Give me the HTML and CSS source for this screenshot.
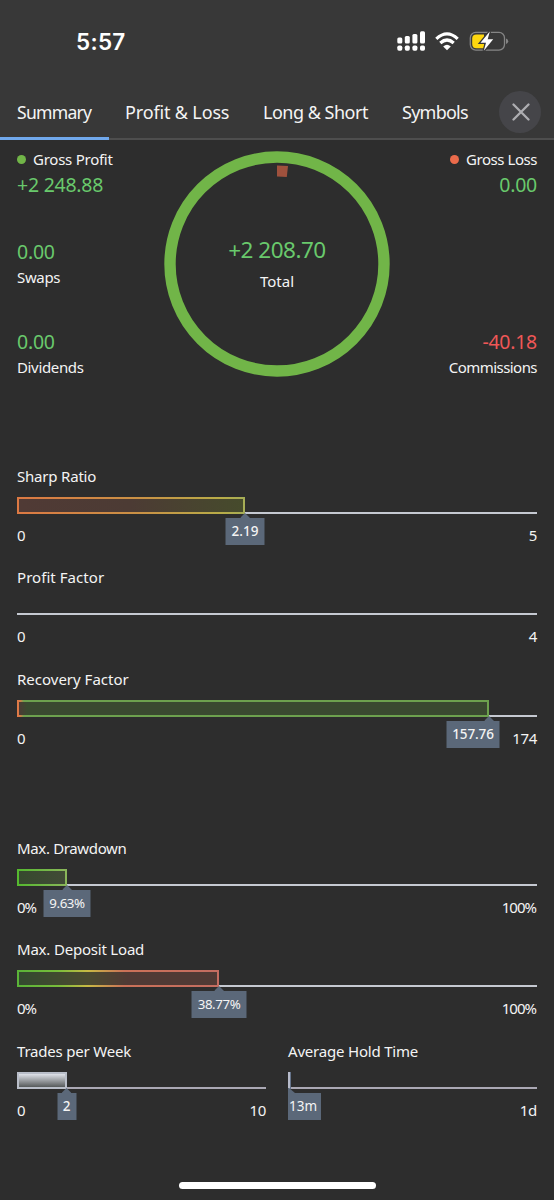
FILE: index.html
```html
<!DOCTYPE html>
<html lang="en">
<head>
<meta charset="utf-8">
<title>Summary</title>
<link rel="stylesheet" href="styles.css">
</head>
<body>
<header class="header">
  <div class="status">
    <span class="time">5:57</span>
    <svg class="status-icons" width="114" height="26" viewBox="396 29 114 26">
      <g fill="#fff">
        <rect x="397.3" y="37.5" width="5" height="6" rx="1.5"/><rect x="404.8" y="36" width="5" height="7.5" rx="1.5"/><rect x="412.4" y="34" width="5" height="9.5" rx="1.5"/><rect x="420" y="31.3" width="5" height="12.2" rx="1.5"/>
        <rect x="397.3" y="45.5" width="5" height="5.3" rx="1.7"/><rect x="404.8" y="45.5" width="5" height="5.3" rx="1.7"/><rect x="412.4" y="45.5" width="5" height="5.3" rx="1.7"/><rect x="420" y="45.5" width="5" height="5.3" rx="1.7"/>
        <path d="M443.2 46.4Q447 43.2 450.8 46.4L447 50.3Z"/>
      </g>
      <g fill="none" stroke="#fff" stroke-width="3.2">
        <path d="M436.3 38.9Q447 28.9 457.7 38.9"/><path d="M440.3 43Q447 37 453.7 43"/>
      </g>
      <rect x="470.3" y="32.4" width="34.2" height="17.7" rx="5.5" fill="none" stroke="#858585" stroke-width="1.3"/>
      <path d="M506 38.5Q508.2 39.2 508.2 41.2T506 44Z" fill="#858585"/>
      <path d="M476.5 34.4H484V48.2H476.5Q472.2 48.2 472.2 44V38.6Q472.2 34.4 476.5 34.4Z" fill="#fdd60f"/>
      <path d="M489.8 31.5L480.5 42.7H486L483.8 50.8L493.2 39.3H487.7Z" fill="#fff" stroke="#383838" stroke-width="2.6" paint-order="stroke"/>
    </svg>
  </div>
  <nav class="tabs">
    <a class="tab tab-summary active"><span>Summary</span></a>
    <a class="tab tab-profit"><span>Profit &amp; Loss</span></a>
    <a class="tab tab-long"><span>Long &amp; Short</span></a>
    <a class="tab tab-symbols"><span>Symbols</span></a>
    <button class="close" aria-label="Close"><svg width="18" height="18" viewBox="0 0 18 18"><path d="M1.5 1.5L16.5 16.5M16.5 1.5L1.5 16.5" fill="none" stroke="#adadb1" stroke-width="2.3" stroke-linecap="round"/></svg></button>
  </nav>
</header>
<main>
  <section class="overview">
    <div class="stats">
      <div class="stat"><div class="label gp"><i class="dot green"></i>Gross Profit</div><div class="value">+2 248.88</div></div>
      <div class="stat swaps"><div class="value">0.00</div><div class="label">Swaps</div></div>
      <div class="stat last"><div class="value">0.00</div><div class="label">Dividends</div></div>
    </div>
    <div class="donut">
      <svg width="226" height="226" viewBox="-113 -113 226 226"><circle r="107" fill="none" stroke="#71b548" stroke-width="11.4"/><path d="M0 -98.5A98.5 98.5 0 0 1 11 -97.9L9.8 -87A87.5 87.5 0 0 0 0 -87.5Z" fill="#9f513d"/></svg>
      <div class="total"><div class="total-value">+2 208.70</div><div class="label tot">Total</div></div>
    </div>
    <div class="stats right">
      <div class="stat"><div class="label gl"><i class="dot red"></i>Gross Loss</div><div class="value">0.00</div></div>
      <div class="stat last"><div class="value negative">-40.18</div><div class="label comm">Commissions</div></div>
    </div>
  </section>
  <section class="gauges">
    <div class="gauge"><div class="title t-sharp">Sharp Ratio</div><div class="track"><div class="bar sharp" style="width:228px"><span class="tip w39">2.19</span></div></div><div class="scale"><span>0</span><span>5</span></div></div>
    <div class="gauge"><div class="title t-pf">Profit Factor</div><div class="track"></div><div class="scale"><span>0</span><span>4</span></div></div>
    <div class="gauge"><div class="title t-rf">Recovery Factor</div><div class="track"><div class="bar recovery" style="width:472px"><span class="tip w53">157.76</span></div></div><div class="scale"><span>0</span><span>174</span></div></div>
  </section>
  <section class="gauges risk">
    <div class="gauge"><div class="title t-dd">Max. Drawdown</div><div class="track"><div class="bar drawdown" style="width:50px"><span class="tip w47">9.63%</span></div></div><div class="scale"><span class="pct">0%</span><span class="pct">100%</span></div></div>
    <div class="gauge"><div class="title t-dl">Max. Deposit Load</div><div class="track"><div class="bar deposit" style="width:202px"><span class="tip w55">38.77%</span></div></div><div class="scale"><span class="pct">0%</span><span class="pct">100%</span></div></div>
  </section>
  <section class="activity">
    <div class="gauge"><div class="title t-tw">Trades per Week</div><div class="track dim"><div class="bar trades" style="width:50px"><span class="tip w19">2</span></div></div><div class="scale"><span>0</span><span>10</span></div></div>
    <div class="gauge"><div class="title t-ht">Average Hold Time</div><div class="track dim"><div class="bar hold" style="width:3px"><span class="tip edge">13m</span></div></div><div class="scale"><span></span><span>1d</span></div></div>
  </section>
</main>
<div class="home"></div>
</body>
</html>
```
FILE: styles.css
```css
* { box-sizing: border-box; }
body { margin: 0; width: 554px; height: 1200px; overflow: hidden; background: #2d2d2d; color: #f4f4f4; font: 15px/22px "Noto Sans", "Open Sans", sans-serif; display: flex; flex-direction: column; }
.header { height: 139px; background: #383838; flex: none; }
.status { height: 84px; padding: 0 44px 0 76px; display: flex; justify-content: space-between; align-items: center; }
.time { font: 600 22.5px/30px Inter, sans-serif; color: #fff; letter-spacing: .3px; }
.status-icons { display: block; }
.tabs { height: 56px; display: flex; border-bottom: 2px solid #4e4e4e; font-size: 18px; line-height: 56px; white-space: nowrap; }
.tab { padding-left: 17px; height: 56px; flex: none; }
.tab.active { border-bottom: 3px solid #70a8ec; }
.tab-summary { width: 109px; letter-spacing: -.75px; font-size: 17.6px; }
.tab-profit { width: 137px; padding-left: 16px; letter-spacing: -.15px; }
.tab-long { width: 139px; letter-spacing: -.5px; }
.tab-symbols { width: 114px; letter-spacing: -.75px; }
.close { width: 42px; height: 42px; margin-top: 6.5px; padding: 0; border: 0; border-radius: 50%; background: #454549; display: flex; align-items: center; justify-content: center; }
.close svg { margin-left: 1px; }
.overview { height: 324px; padding: 9px 17px 0; display: flex; justify-content: space-between; }
.stats { width: 147px; height: 230px; display: flex; flex-direction: column; }
.right { text-align: right; }
.label { height: 22px; white-space: nowrap; letter-spacing: -.35px; }
.gp { letter-spacing: -.25px; }
.gl { letter-spacing: -.45px; }
.comm { letter-spacing: -.55px; }
.value { height: 28px; line-height: 28px; font-size: 19.5px; letter-spacing: -.25px; color: #69c96c; }
.gp + .value, .gl + .value { line-height: 29px; }
.negative { color: #ef5757; }
.swaps { margin-top: 40px; }
.last { margin-top: auto; }
.dot { display: inline-block; width: 9px; height: 9px; margin-right: 7px; border-radius: 50%; position: relative; top: -1px; }
.green { background: #71b548; }
.red { background: #eb6b4b; }
.donut { display: grid; width: 226px; height: 226px; margin-top: 2.5px; }
.donut > * { grid-area: 1 / 1; }
.total { padding-top: 82px; text-align: center; }
.total-value { height: 34px; line-height: 34px; font-size: 22.5px; letter-spacing: -.5px; color: #69c96c; }
.total .label { line-height: 29px; letter-spacing: 0; }
.gauges { display: grid; grid-template-rows: 101px 102px; padding: 0 17px; }
.risk { height: 203px; margin-top: 68px; }
.gauge { height: 101px; }
.title { height: 26px; line-height: 26px; margin-bottom: 8px; letter-spacing: -.2px; }
.t-pf { letter-spacing: .05px; }
.t-rf { letter-spacing: 0; }
.t-dd { letter-spacing: -.35px; }
.track { position: relative; height: 17px; border-bottom: 2px solid #c5c9d1; }
.dim { border-color: #aaa8b4; }
.bar { position: relative; height: 17px; border: 2px solid; }
.sharp { border-image: linear-gradient(90deg, #dc7943, #c99245 55%, #b8ac48 90%, #a6ad56) 1; background: linear-gradient(90deg, #503a35, #4c3b34 50%, #464b2c); }
.recovery { border-image: linear-gradient(90deg, #e17947 0, #d57b47 2px, #6da14e 6px) 1; background: linear-gradient(90deg, #4c3a35, #3a4930 8px); }
.drawdown { border-image: linear-gradient(90deg, #55b92f, #8ab65a) 1; background: linear-gradient(90deg, #36492e, #414b36); }
.deposit { border-image: linear-gradient(90deg, #5ab338, #78bd3b 20%, #c9b944 35%, #cb7158 53%, #c46d61) 1; background: linear-gradient(90deg, #334a2f, #4b4a30 35%, #503a35 55%); }
.trades { border-color: #b9bec9; background: linear-gradient(#dfe2e9, #565a5b); }
.hold { border: 0; border-left: 2px solid #b7bbcb; border-right: 1px solid #65738a; }
.tip { position: absolute; top: 19px; right: 0; height: 27px; line-height: 27px; transform: translateX(50%); margin-right: -2px; background: #5b6879; color: #f4f4f4; font-size: 13.5px; font-weight: 500; text-align: center; }
.tip::before { content: ""; position: absolute; left: 50%; top: -5px; width: 10px; height: 5px; margin-left: -5px; background: #5b6879; clip-path: polygon(50% 0, 100% 100%, 0 100%); }
.w39 { width: 39px; }
.w53 { width: 53px; right: 16px; letter-spacing: -.1px; }
.w53::before { left: 42.5px; }
.w47, .w55 { font-size: 13.3px; font-weight: 400; letter-spacing: -.4px; }
.w47 { width: 47px; }
.w55 { width: 55px; }
.w19 { width: 19px; margin-right: -1.5px; }
.edge { left: -2px; top: 21px; right: auto; width: 33px; margin: 0; transform: none; text-align: left; padding-left: 1px; font-weight: 400; }
.edge::before { left: 5px; width: 7px; clip-path: polygon(0 0, 15% 0, 100% 100%, 0 100%); }
.scale { height: 26px; margin-top: 8px; line-height: 26px; display: flex; justify-content: space-between; letter-spacing: -.3px; }
.pct { letter-spacing: -1px; }
.scale .pct:last-child { margin-right: 1px; }
.activity { display: grid; grid-template-columns: 249px 249px; column-gap: 22px; padding: 0 17px; }
.activity .title { line-height: 26px; }
.home { width: 197px; height: 7px; margin: auto auto 11px; border-radius: 4px; background: #fff; flex: none; }
```
